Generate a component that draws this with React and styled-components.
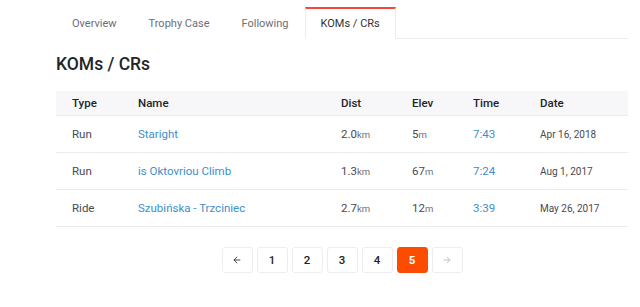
import React from 'react'
import styled, { createGlobalStyle } from 'styled-components'
import { ArrowLeft, ArrowRight } from 'lucide-react'

const GlobalStyle = createGlobalStyle`
  body {
    margin: 0;
    background: #fff;
    font-family: Roboto, "Liberation Sans", sans-serif;
    color: #333;
  }
`

const Page = styled.div`
  padding: 7px 12px 0 56px;
`

const Tabs = styled.ul`
  display: flex;
  margin: 0;
  padding: 0;
  list-style: none;
  border-bottom: 1px solid #eaeaef;
`

const Tab = styled.li`
  padding: 0 15px 2px;
  height: 28px;
  display: flex;
  align-items: center;
  font-size: 11px;
  color: ${p => (p.active ? '#333' : '#6d6d78')};
  border: 1px solid ${p => (p.active ? '#eaeaef' : 'transparent')};
  border-top: 2px solid ${p => (p.active ? '#f4473f' : 'transparent')};
  border-bottom: none;
  margin-bottom: -1px;
  background: #fff;
`

const Heading = styled.h2`
  margin: 14px 0 16px;
  font-size: 17.5px;
  font-weight: 500;
  color: #242428;
  line-height: 22px;
`

const Table = styled.table`
  width: 100%;
  border-collapse: collapse;
  font-size: 11.5px;
`

const Th = styled.th`
  text-align: left;
  font-weight: 500;
  color: #242428;
  background: #f7f7fa;
  height: 24px;
  padding: 0 0 0 16px;
  width: ${p => p.w}px;
  border-bottom: 1px solid #eaeaef;
`

const Td = styled.td`
  height: 36px;
  padding: 0 0 0 16px;
  color: #494950;
  border-bottom: 1px solid #eaeaef;
  font-size: ${p => (p.small ? '10px' : '11.5px')};
`

const Link = styled.a`
  color: #3d8fcc;
  text-decoration: none;
`

const Unit = styled.abbr`
  font-size: 9.5px;
  color: #6d6d78;
  text-decoration: none;
`

const Pager = styled.nav`
  display: flex;
  justify-content: center;
  gap: 4px;
  margin-top: 20px;
`

const PageButton = styled.button`
  width: 31px;
  height: 26px;
  display: flex;
  align-items: center;
  justify-content: center;
  border: 1px solid ${p => (p.active ? '#fc4c02' : '#ececf2')};
  border-radius: 3px;
  background: ${p => (p.active ? '#fc4c02' : '#fff')};
  color: ${p => (p.active ? '#fff' : p.disabled ? '#b5b5be' : '#242428')};
  font-family: inherit;
  font-size: 11.5px;
  font-weight: ${p => (p.active ? 700 : 500)};
  padding: 0;
`

const rows = [
  { type: 'Run', name: 'Staright', dist: '2.0', elev: '5', time: '7:43', date: 'Apr 16, 2018' },
  { type: 'Run', name: 'is Oktovriou Climb', dist: '1.3', elev: '67', time: '7:24', date: 'Aug 1, 2017' },
  { type: 'Ride', name: 'Szubińska - Trzciniec', dist: '2.7', elev: '12', time: '3:39', date: 'May 26, 2017' },
]

export default function App() {
  return (
    <Page>
      <GlobalStyle />
      <Tabs>
        <Tab>Overview</Tab>
        <Tab>Trophy Case</Tab>
        <Tab>Following</Tab>
        <Tab active>KOMs / CRs</Tab>
      </Tabs>
      <Heading>KOMs / CRs</Heading>
      <Table>
        <thead>
          <tr>
            <Th w={50}>Type</Th>
            <Th w={187}>Name</Th>
            <Th w={55}>Dist</Th>
            <Th w={45}>Elev</Th>
            <Th w={51}>Time</Th>
            <Th>Date</Th>
          </tr>
        </thead>
        <tbody>
          {rows.map(r => (
            <tr key={r.name}>
              <Td>{r.type}</Td>
              <Td><Link href="#">{r.name}</Link></Td>
              <Td>{r.dist}<Unit>km</Unit></Td>
              <Td>{r.elev}<Unit>m</Unit></Td>
              <Td><Link href="#">{r.time}</Link></Td>
              <Td small>{r.date}</Td>
            </tr>
          ))}
        </tbody>
      </Table>
      <Pager>
        <PageButton aria-label="Previous"><ArrowLeft size={10} strokeWidth={2} /></PageButton>
        <PageButton>1</PageButton>
        <PageButton>2</PageButton>
        <PageButton>3</PageButton>
        <PageButton>4</PageButton>
        <PageButton active>5</PageButton>
        <PageButton disabled aria-label="Next"><ArrowRight size={10} strokeWidth={2} /></PageButton>
      </Pager>
    </Page>
  )
}
